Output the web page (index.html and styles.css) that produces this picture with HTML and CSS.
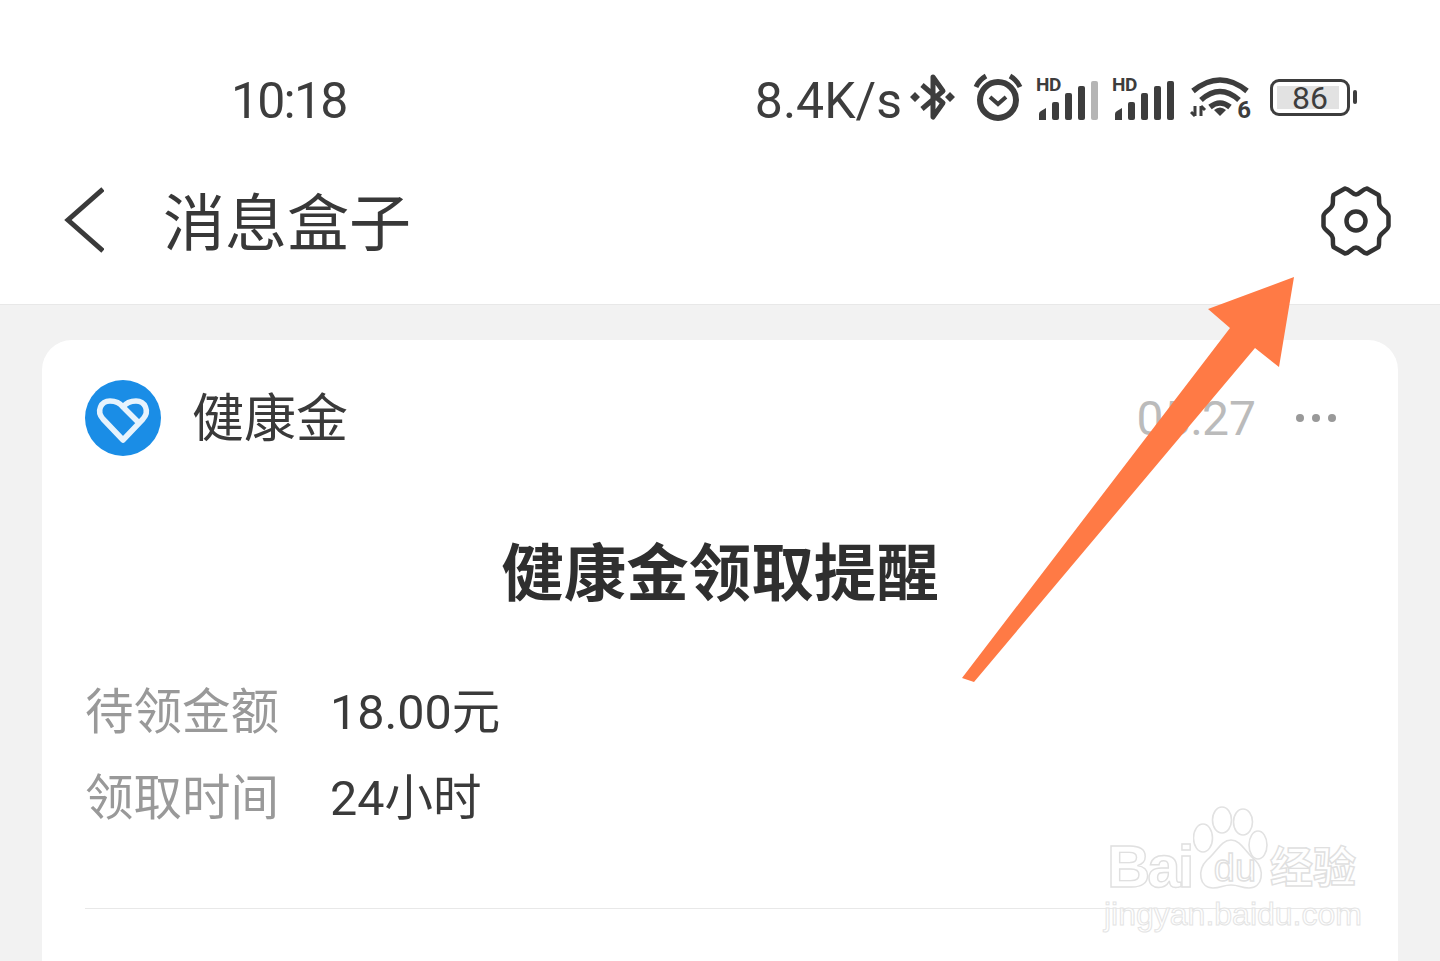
FILE: index.html
```html
<!DOCTYPE html>
<html lang="zh-CN">

<head>
  <meta charset="UTF-8">
  <title>消息盒子</title>
  <link rel="stylesheet" href="styles.css">
</head>

<body>
  <div class="top">
    <div class="status-bar">
      <span class="clock">10:18</span>
      <div class="status-icons">
        <span class="speed">8.4K/s</span>
        <svg class="ico-bt" viewBox="0 0 46 50">
          <path d="M12 13 L33 31 L23 45 V5 L33 19 L12 37" fill="none" stroke="#3d3d3d" stroke-width="5" stroke-linejoin="round" />
          <path d="M0 25 L5 20 L10 25 L5 30Z M35 25 L40 20 L45 25 L40 30Z" fill="#3d3d3d" />
        </svg>
        <svg class="ico-alarm" viewBox="0 0 50 48">
          <circle cx="25" cy="27" r="18" fill="none" stroke="#3d3d3d" stroke-width="6" />
          <path d="M17 24 L25 31 L33 24" fill="none" stroke="#3d3d3d" stroke-width="4" />
          <path d="M3 14 Q6 7 13 3 M47 14 Q44 7 37 3" fill="none" stroke="#3d3d3d" stroke-width="5" />
        </svg>
        <div class="signal">
          <span class="hd">HD</span>
          <svg class="bars" viewBox="0 0 64 42">
            <path d="M3 42 V36 Q3 34 5 33 L10 30 V42Z" fill="#3d3d3d" />
            <rect x="16" y="24" width="7" height="18" rx="2" fill="#3d3d3d" />
            <rect x="29" y="15" width="7" height="27" rx="2" fill="#3d3d3d" />
            <rect x="42" y="8" width="7" height="34" rx="2" fill="#3d3d3d" />
            <rect x="55" y="3" width="7" height="39" rx="2" fill="#b5b5b5" />
          </svg>
        </div>
        <div class="signal">
          <span class="hd">HD</span>
          <svg class="bars" viewBox="0 0 64 42">
            <path d="M3 42 V36 Q3 34 5 33 L10 30 V42Z" fill="#3d3d3d" />
            <rect x="16" y="24" width="7" height="18" rx="2" fill="#3d3d3d" />
            <rect x="29" y="15" width="7" height="27" rx="2" fill="#3d3d3d" />
            <rect x="42" y="8" width="7" height="34" rx="2" fill="#3d3d3d" />
            <rect x="55" y="3" width="7" height="39" rx="2" fill="#3d3d3d" />
          </svg>
        </div>
        <div class="wifi">
          <svg viewBox="0 0 60 42">
            <path d="M3 16 Q30 -6 57 16 M11 25 Q30 8 49 25 M20 32 Q30 24 40 32" fill="none" stroke="#3d3d3d" stroke-width="5.5" />
            <path d="M24 35 Q30 30 36 35 L30 41Z" fill="#3d3d3d" />
            <path d="M5 31 V41 M1 37 L5 41 M11 41 V31 M11 31 L15 35" fill="none" stroke="#3d3d3d" stroke-width="3" />
          </svg>
          <span class="wifi-num">6</span>
        </div>
        <div class="battery">
          <div class="battery-body"><span class="battery-level">86</span></div>
          <div class="battery-cap"></div>
        </div>
      </div>
    </div>
    <div class="nav-bar">
      <svg class="ico-back" viewBox="0 0 40 66">
        <path d="M39 2 L4 33 L39 64" fill="none" stroke="#3a3a3a" stroke-width="5" />
      </svg>
      <h1 class="nav-title">消息盒子</h1>
      <svg class="ico-gear" viewBox="0 0 72 72">
        <path d="M36 9.5 C40 9.5 42 4 47 3.5 L58.5 10 C60 14 58 18 60 21 C62 25 68 27 68.500 31 V41 C68 45 62 47 60 51 C58 54 60 58 58.500 62 L47 68.500 C42 68 40 62.500 36 62.500 C32 62.500 30 68 25 68.500 L13.500 62 C12 58 14 54 12 51 C10 47 4 45 3.500 41 V31 C4 27 10 25 12 21 C14 18 12 14 13.500 10 L25 3.500 C30 4 32 9.500 36 9.500Z" fill="none" stroke="#333" stroke-width="4.5" stroke-linejoin="round" />
        <circle cx="36" cy="36" r="9.5" fill="none" stroke="#333" stroke-width="4.5" />
      </svg>
    </div>
  </div>

  <div class="card">
    <div class="card-head">
      <svg class="app-logo" viewBox="0 0 76 76">
        <circle cx="38" cy="38" r="38" fill="#1a8de6" />
        <path d="M38 60 L18 39 C11 31 16 21 25 21 C31 21 35 23 38 27 C41 23 46 21 51 21 C60 21 65 31 58 39Z M38 27 L54 43" fill="none" stroke="#e6f3fd" stroke-width="5.5" stroke-linejoin="round" />
      </svg>
      <span class="app-name">健康金</span>
      <span class="msg-time">05:27</span>
      <div class="dots"><i></i><i></i><i></i></div>
    </div>
    <h2 class="msg-title">健康金领取提醒</h2>
    <div class="rows">
      <div class="row"><span class="row-label">待领金额</span><span class="row-value">18.00元</span></div>
      <div class="row"><span class="row-label">领取时间</span><span class="row-value">24小时</span></div>
    </div>
    <div class="divider"></div>
  </div>

  <!-- annotation arrow -->
  <svg class="arrow" viewBox="0 0 1440 961">
    <polygon points="1294,277 1208,309 1230,328 962,678 974,682 1255,348 1279,367" fill="#ff7a45" />
  </svg>

  <div class="watermark">
    <svg class="paw" viewBox="0 0 75 84">
      <g fill="#fff" stroke="#e2e2e2" stroke-width="1.6">
        <ellipse cx="10" cy="32" rx="9.5" ry="14" />
        <ellipse cx="29" cy="14" rx="9.5" ry="13" />
        <ellipse cx="50" cy="16" rx="9.5" ry="13" />
        <ellipse cx="65" cy="39" rx="9" ry="14" />
        <path d="M38 34 C48 34 52 46 62 54 C72 64 70 82 56 82 C48 82 46 79 38 79 C30 79 28 82 20 82 C6 82 4 64 14 54 C24 46 28 34 38 34Z" />
      </g>
    </svg>
    <div class="wm-line">
      <span class="wm-bai">Bai</span>
      <span class="wm-du">du</span>
      <span class="wm-cn">经验</span>
    </div>
    <div class="wm-url">jingyan.baidu.com</div>
  </div>
</body>

</html>
```

FILE: styles.css
```css
* {
  box-sizing: border-box;
}

html,
body {
  margin: 0;
  height: 961px;
  overflow: hidden;
}

body {
  position: relative;
  background: #f2f2f2;
  color: #333;
  font-family: Roboto, 'Noto Sans CJK SC', sans-serif;
}

.top {
  height: 305px;
  background: #fff;
  border-bottom: 1px solid #e8e8e8;
}

.status-bar {
  height: 150px;
  padding: 44px 83px 0 231px;
  display: flex;
  justify-content: space-between;
  align-items: center;
  color: #3d3d3d;
}

.clock {
  padding-top: 7px;
  font-size: 50px;
  letter-spacing: -1.8px;
}

.status-icons {
  display: flex;
  align-items: center;
}

.speed {
  padding-top: 7px;
  font-size: 50px;
  margin-right: 8px;
}

.ico-bt {
  width: 46px;
  height: 50px;
  margin-right: 17px;
}

.ico-alarm {
  width: 50px;
  height: 48px;
  margin-right: 13px;
}

.signal {
  position: relative;
  width: 64px;
  height: 42px;
  margin-top: 4px;
  margin-right: 12px;
}

.hd {
  position: absolute;
  top: -2px;
  left: 0;
  font-size: 19px;
  font-weight: 700;
  letter-spacing: -0.5px;
  line-height: 18px;
}

.bars {
  display: block;
  width: 64px;
  height: 42px;
}

.wifi {
  position: relative;
  width: 60px;
  height: 44px;
  margin-right: 20px;
  margin-left: 2px;
}

.wifi svg {
  width: 60px;
  height: 42px;
}

.wifi-num {
  position: absolute;
  right: -1px;
  bottom: -1px;
  font-size: 24px;
  font-weight: 700;
  line-height: 20px;
}

.battery {
  display: flex;
  align-items: center;
}

.battery-body {
  width: 80px;
  height: 37px;
  padding: 4px;
  border: 3px solid #3d3d3d;
  border-radius: 9px;
}

.battery-level {
  display: block;
  width: 62px;
  height: 100%;
  padding-left: 4px;
  background: #e2e2e2;
  font-size: 32px;
  line-height: 24px;
  text-align: center;
}

.battery-cap {
  width: 4px;
  height: 14px;
  margin-left: 3px;
  background: #3d3d3d;
  border-radius: 2px;
}

.nav-bar {
  height: 154px;
  padding: 0 48px 16px 64px;
  display: flex;
  align-items: center;
}

.ico-back {
  width: 40px;
  height: 66px;
  margin-top: 2px;
}

.nav-title {
  margin: 0 0 0 59px;
  flex: 1;
  font-size: 62px;
  font-weight: 400;
  color: #383838;
  font-family: 'Noto Sans CJK SC', sans-serif;
}

.ico-gear {
  width: 72px;
  height: 72px;
  margin-top: 4px;
}

.card {
  height: 621px;
  margin: 35px 42px 0;
  padding: 0 43px;
  background: #fff;
  border-radius: 30px 30px 0 0;
}

.card-head {
  height: 156px;
  display: flex;
  align-items: center;
}

.app-logo {
  width: 76px;
  height: 76px;
}

.app-name {
  margin: 0 0 8px 31px;
  flex: 1;
  font-size: 52px;
  color: #3a3a3a;
  font-family: 'Noto Sans CJK SC', sans-serif;
}

.msg-time {
  font-size: 48px;
  color: #bbb;
}

.dots {
  display: flex;
  gap: 8px;
  margin: 0 19px 0 40px;
}

.dots i {
  display: block;
  width: 8px;
  height: 8px;
  border-radius: 50%;
  background: #999;
}

.msg-title {
  margin: 0;
  padding-top: 23px;
  height: 169px;
  text-align: center;
  font-size: 62.5px;
  line-height: 100px;
  font-weight: 700;
  font-family: 'Noto Sans CJK SC', sans-serif;
  color: #2f2f2f;
}

.row {
  height: 86px;
  display: flex;
  align-items: center;
  font-size: 48.5px;
}

.row-label {
  width: 245px;
  color: #999;
  font-family: 'Noto Sans CJK SC', sans-serif;
}

.row-value {
  color: #3a3a3a;
}

.divider {
  height: 1px;
  margin: 71px 0 0;
  background: #e8e8e8;
}

.arrow {
  position: absolute;
  top: 0;
  left: 0;
  width: 1440px;
  height: 961px;
}

.watermark {
  position: absolute;
  left: 1104px;
  top: 806px;
  width: 264px;
  height: 130px;
}

.paw {
  position: absolute;
  left: 89px;
  top: 0;
  width: 75px;
  height: 84px;
}

.wm-line {
  position: absolute;
  left: 3px;
  top: 31px;
  display: flex;
  align-items: baseline;
  white-space: nowrap;
  color: #fff;
  -webkit-text-stroke: 1.4px #e0e0e0;
  font-family: 'Liberation Sans', sans-serif;
}

.wm-bai {
  width: 93px;
  font-size: 60px;
  line-height: 60px;
  font-weight: 700;
  letter-spacing: -3px;
}

.wm-du {
  position: relative;
  top: -6px;
  width: 70px;
  text-align: center;
  font-size: 38px;
}

.wm-cn {
  position: relative;
  top: -4px;
  font-size: 43px;
  font-weight: 700;
  font-family: 'Noto Sans CJK SC', sans-serif;
}

.wm-url {
  position: absolute;
  left: 0;
  top: 90px;
  color: #fff;
  -webkit-text-stroke: 1px #e4e4e4;
  font-size: 32px;
  line-height: 36px;
  white-space: nowrap;
  font-family: 'Liberation Sans', sans-serif;
}
```
